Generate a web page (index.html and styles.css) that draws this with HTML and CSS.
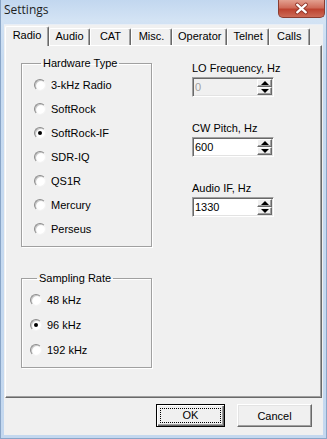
FILE: index.html
```html
<!DOCTYPE html>
<html lang="en">
<head>
    <meta charset="UTF-8">
    <title>Settings</title>
    <link rel="stylesheet" href="styles.css">
</head>
<body>
    <div class="window">
        <div class="titlebar">
            <span class="title">Settings</span>
            <div class="close">
                <svg width="47" height="18" viewBox="0 0 47 18">
                    <path d="M19 4.5 L28 12.5 M28 4.5 L19 12.5" stroke="#8c3226" stroke-width="4.2" stroke-linecap="round"/>
                    <path d="M19 4.5 L28 12.5 M28 4.5 L19 12.5" stroke="#fff" stroke-width="2.4" stroke-linecap="round"/>
                </svg>
            </div>
        </div>

        <div class="client">
            <div class="tabs">
                <div class="tab active">Radio</div>
                <div class="tab">Audio</div>
                <div class="tab">CAT</div>
                <div class="tab">Misc.</div>
                <div class="tab">Operator</div>
                <div class="tab">Telnet</div>
                <div class="tab">Calls</div>
            </div>

            <div class="panel">
                <div class="col-left">
                    <fieldset class="grupo hardware">
                        <legend>Hardware Type</legend>
                        <div class="opcion"><span class="radio"></span>3-kHz Radio</div>
                        <div class="opcion"><span class="radio"></span>SoftRock</div>
                        <div class="opcion"><span class="radio on"></span>SoftRock-IF</div>
                        <div class="opcion"><span class="radio"></span>SDR-IQ</div>
                        <div class="opcion"><span class="radio"></span>QS1R</div>
                        <div class="opcion"><span class="radio"></span>Mercury</div>
                        <div class="opcion"><span class="radio"></span>Perseus</div>
                    </fieldset>

                    <fieldset class="grupo sampling">
                        <legend>Sampling Rate</legend>
                        <div class="opcion"><span class="radio"></span>48 kHz</div>
                        <div class="opcion"><span class="radio on"></span>96 kHz</div>
                        <div class="opcion"><span class="radio"></span>192 kHz</div>
                    </fieldset>
                </div>

                <div class="col-right">
                    <div class="campo">
                        <div class="etiqueta">LO Frequency, Hz</div>
                        <div class="spin disabled">
                            <span class="valor">0</span>
                            <span class="flechas"><span class="flecha"><i class="arriba"></i></span><span class="flecha"><i class="abajo"></i></span></span>
                        </div>
                    </div>
                    <div class="campo">
                        <div class="etiqueta">CW Pitch, Hz</div>
                        <div class="spin">
                            <span class="valor">600</span>
                            <span class="flechas"><span class="flecha"><i class="arriba"></i></span><span class="flecha"><i class="abajo"></i></span></span>
                        </div>
                    </div>
                    <div class="campo">
                        <div class="etiqueta">Audio IF, Hz</div>
                        <div class="spin">
                            <span class="valor">1330</span>
                            <span class="flechas"><span class="flecha"><i class="arriba"></i></span><span class="flecha"><i class="abajo"></i></span></span>
                        </div>
                    </div>
                </div>
            </div>

            <div class="botones">
                <button type="button" class="boton ok"><span class="foco">OK</span></button>
                <button type="button" class="boton cancel">Cancel</button>
            </div>
        </div>
    </div>
</body>
</html>
```

FILE: styles.css
```css
*{
    box-sizing: border-box;
    margin: 0;
    padding: 0;
}
body{
    font-family: "Liberation Sans", Arial, sans-serif;
    font-size: 11px;
    color: #000;
    background: #fff;
}
.window{
    width: 327px;
    height: 439px;
    display: flex;
    flex-direction: column;
    padding: 0 3px 3px 3px;
    background: linear-gradient(#c2d7ef, #d3e3f4 20px, #c7dbf1 60px, #c4d8ef);
    border-left: 1px solid #8aa6c8;
    border-right: 1px solid #8aa6c8;
    border-bottom: 1px solid #8aa6c8;
}
.titlebar{
    height: 24px;
    display: flex;
    justify-content: space-between;
    align-items: flex-start;
    margin-left: -1px;
}
.title{
    font-family: "Open Sans", "DejaVu Sans", sans-serif;
    font-size: 12px;
    line-height: 16px;
    padding: 2px 0 0 1px;
    color: #1e1e1e;
}
.close{
    width: 47px;
    height: 18px;
    margin-right: -2px;
    border: 1px solid #8a3c30;
    border-top: none;
    border-radius: 0 0 5px 5px;
    background: linear-gradient(#e3a090, #cf6c5a 45%, #bd4330 55%, #cc6a56);
    display: flex;
    align-items: center;
    justify-content: center;
}
.close svg{
    display: block;
}

.client{
    flex: 1;
    background: #f0f0f0;
    display: flex;
    flex-direction: column;
    border-top: 1px solid #e8eef6;
}
.tabs{
    height: 20px;
    display: flex;
    align-items: flex-end;
    padding: 0 0 0 1px;
    position: relative;
    z-index: 1;
}
.tab{
    height: 17px;
    min-width: 41px;
    padding: 0 5px;
    line-height: 15px;
    text-align: center;
    background: #f0f0f0;
    border-left: 1px solid #fff;
    border-top: 1px solid #fff;
    border-right: 1px solid #696969;
    box-shadow: inset -1px 0 #a0a0a0;
    border-radius: 2px 2px 0 0;
}
.tab.active{
    height: 20px;
    min-width: 44px;
    padding: 0 6px;
    line-height: 17px;
    margin-bottom: -1px;
}

.panel{
    height: 353px;
    margin: 0 1px;
    display: flex;
    border-left: 1px solid #fff;
    border-top: 1px solid #fff;
    border-right: 1px solid #696969;
    border-bottom: 1px solid #696969;
    box-shadow: inset -1px -1px #a0a0a0;
}
.col-left{
    width: 131px;
    margin-left: 15px;
    padding-top: 11px;
}
.grupo{
    border: 1px solid #a0a0a0;
    box-shadow: inset 1px 1px #fff, 1px 1px #fff;
    padding: 0;
}
.grupo legend{
    margin-left: 7px;
    padding: 0 2px;
    line-height: 13px;
}
.hardware{
    height: 190px;
    padding: 3px 0 0 12px;
}
.hardware .opcion{
    height: 24px;
}
.sampling{
    margin-top: 25px;
    height: 96px;
    padding: 2px 0 0 8px;
}
.sampling .opcion{
    height: 25px;
}
.opcion{
    display: flex;
    align-items: center;
}
.radio{
    width: 12px;
    height: 12px;
    margin-right: 5px;
    border-radius: 50%;
    background: radial-gradient(circle at 60% 60%, #fff 40%, #ececec);
    border: 1px solid;
    border-color: #8c8c8c #f4f4f4 #f4f4f4 #8c8c8c;
    box-shadow: inset 1px 1px #c6c6c6;
    display: flex;
    align-items: center;
    justify-content: center;
}
.radio.on::after{
    content: "";
    width: 4px;
    height: 4px;
    border-radius: 50%;
    background: #000;
}

.col-right{
    margin-left: 40px;
    padding-top: 16px;
}
.campo{
    margin-bottom: 25px;
}
.etiqueta{
    line-height: 13px;
    margin-bottom: 2px;
}
.spin{
    width: 82px;
    height: 20px;
    display: flex;
    background: #fff;
    border: 1px solid;
    border-color: #a0a0a0 #fff #fff #a0a0a0;
    box-shadow: inset 1px 1px #696969, inset -1px -1px #e3e3e3;
}
.spin.disabled{
    background: #f0f0f0;
}
.spin.disabled .valor{
    color: #a0a0a0;
}
.valor{
    flex: 1;
    padding: 1px 0 0 2px;
    line-height: 17px;
}
.flechas{
    width: 15px;
    margin: 1px 1px 1px 0;
    display: flex;
    flex-direction: column;
}
.flecha{
    flex: 1;
    background: #f0f0f0;
    border: 1px solid;
    border-color: #fff #696969 #696969 #fff;
    box-shadow: inset -1px -1px #a0a0a0;
    display: flex;
    align-items: center;
    justify-content: center;
}
.arriba{
    border-left: 4px solid transparent;
    border-right: 4px solid transparent;
    border-bottom: 4px solid #000;
}
.abajo{
    border-left: 4px solid transparent;
    border-right: 4px solid transparent;
    border-top: 4px solid #000;
}

.botones{
    display: flex;
    justify-content: flex-end;
    gap: 12px;
    padding: 6px 11px 0 0;
}
.boton{
    height: 23px;
    font-family: "Liberation Sans", Arial, sans-serif;
    font-size: 11px;
    color: #000;
    background: #f0f0f0;
    border: 1px solid;
    border-color: #fff #696969 #696969 #fff;
    box-shadow: inset -1px -1px #a0a0a0, inset 1px 1px #e3e3e3;
}
.ok{
    width: 69px;
    border: 1px solid #000;
    box-shadow: inset 1px 1px #fff, inset -1px -1px #696969, inset -2px -2px #a0a0a0;
    padding: 3px;
}
.foco{
    display: block;
    height: 100%;
    line-height: 13px;
    border: 1px dotted #000;
}
.cancel{
    width: 75px;
}
```
